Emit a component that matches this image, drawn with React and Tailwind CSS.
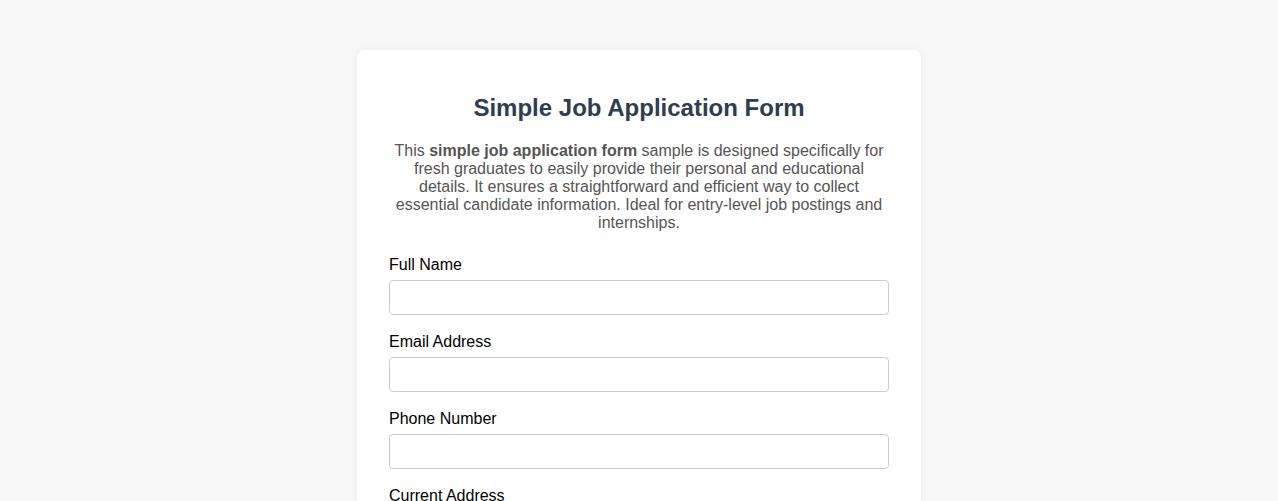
import React from "react";

const fields = [
  { label: "Full Name", type: "text" },
  { label: "Email Address", type: "email" },
  { label: "Phone Number", type: "tel" },
];

const App = () => {
  return (
    <div
      className="min-h-screen bg-[#f8f8f8] pt-[50px] pb-10"
      style={{ fontFamily: '"Liberation Sans", Arial, sans-serif' }}
    >
      <div className="mx-auto w-[564px] bg-white rounded-lg shadow-[0_0_10px_rgba(0,0,0,0.06)] px-8 pt-8 pb-8">
        {/* Header */}
        <h1 className="mt-3 text-center text-[24px] leading-[28px] font-bold text-[#2c3e50]">
          Simple Job Application Form
        </h1>
        <p className="mt-[20px] mb-[23px] text-center text-[16px] leading-[18px] text-[#555555]">
          This <strong>simple job application form</strong> sample is designed
          specifically for fresh graduates to easily provide their personal and
          educational details. It ensures a straightforward and efficient way to
          collect essential candidate information. Ideal for entry-level job
          postings and internships.
        </p>

        {/* Campos */}
        <form>
          {fields.map((f) => (
            <div key={f.label} className="mb-[17px]">
              <label className="block pt-[1px] mb-[6px] text-[16px] leading-[18px] text-black">
                {f.label}
              </label>
              <input
                type={f.type}
                className="block w-full h-[35px] px-2 border border-[#cccccc] rounded bg-white text-[16px] outline-none"
              />
            </div>
          ))}
          <div className="mb-[17px]">
            <label className="block pt-[1px] mb-[6px] text-[16px] leading-[18px] text-black">
              Current Address
            </label>
            <textarea
              rows={3}
              className="block w-full px-2 py-2 border border-[#cccccc] rounded bg-white text-[16px] outline-none resize-y"
            />
          </div>
          <div className="mb-[17px]">
            <label className="block pt-[1px] mb-[6px] text-[16px] leading-[18px] text-black">
              Highest Educational Qualification
            </label>
            <input
              type="text"
              className="block w-full h-[35px] px-2 border border-[#cccccc] rounded bg-white text-[16px] outline-none"
            />
          </div>
          <button
            type="button"
            className="w-full h-[40px] bg-[#2c3e50] text-white rounded text-[16px]"
          >
            Submit Application
          </button>
        </form>
      </div>
    </div>
  );
};

export default App;
